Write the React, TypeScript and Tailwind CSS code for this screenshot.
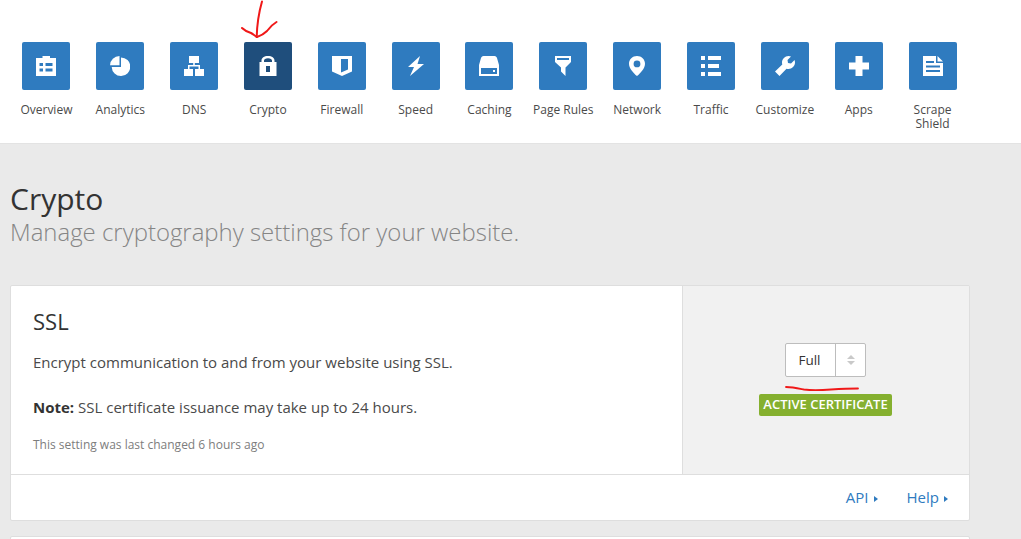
const W = "#fff";

const icons: Record<string, React.ReactNode> = {
  overview: (
    <path fillRule="evenodd" fill={W} d="M6.500 0h7.500v2H20V20H0V2h6.500zM3.500 7v3H7V7zM9.500 7v3h7V7zM3.500 12.500v3H7v-3zM9.500 12.500v3h7v-3z" />
  ),
  analytics: (
    <>
      <path fill={W} d="M9.500 0V9.300H0A9.500 9.500 0 0 1 9.500 0Z" />
      <path fill={W} d="M11 1.400A9.300 9.300 0 1 1 1.700 11H11Z" />
    </>
  ),
  dns: (
    <path fill={W} d="M5 0H15V7H10.800V9H16V13H20V20H11V13H14.500V10.500H5.500V13H9V20H0V13H4V9H9.200V7H5Z" />
  ),
  crypto: (
    <path fillRule="evenodd" fill={W} d="M3.500 6V4.500C3.500 2 6 0 10 0S16.500 2 16.500 4.500V6H18.500V20H1.500V6ZM6 6H14V4.500C14 3.200 12.500 2.200 10 2.200S6 3.200 6 4.500ZM8 10V16H12V10Z" />
  ),
  firewall: (
    <path fillRule="evenodd" fill={W} d="M0 0H20V15.500L10 20 0 15.500ZM9 3V16.500L16 13.500V3Z" />
  ),
  speed: <path fill={W} d="M14 0 2 11H8L4 20 18 8H11.500Z" />,
  caching: (
    <path fillRule="evenodd" fill={W} d="M4.500 0H15.500C17 0 17.500 1 18 2L20 9V20H0V9L2 2C2.500 1 3 0 4.500 0ZM2 12V18H18V12ZM14 14H16V16H14Z" />
  ),
  pagerules: (
    <path fillRule="evenodd" fill={W} d="M2 0H18V6L12.500 11.500V20L8 15.500V11.500L2 6ZM4 2V4H16V2Z" />
  ),
  network: (
    <path fillRule="evenodd" fill={W} d="M10 0C14.500 0 18 3.300 18 7.700 18 12.200 13.500 17.200 10 20 6.500 17.200 2 12.200 2 7.700 2 3.300 5.500 0 10 0ZM10 4.500A3.400 3.400 0 1 0 10 11.300 3.400 3.400 0 0 0 10 4.500Z" />
  ),
  traffic: (
    <path fill={W} d="M0 0H4V4H0ZM7 0H20V4H7ZM0 8H4V12H0ZM7 8H18V12H7ZM0 16H4V20H0ZM7 16H20V20H7Z" />
  ),
  customize: (
    <path fill={W} d="M13.500 0C14.500 0 15.500.2 16 .5L12.500 4 13 7 16 7.500 19.500 4C19.800 4.700 20 5.500 20 6.500 20 10 17 13 13.500 13 12.800 13 12.200 12.900 11.500 12.700L4.500 20 0 15.500 7.300 8.500C7.100 7.800 7 7.200 7 6.500 7 3 10 0 13.500 0Z" />
  ),
  apps: <path fill={W} d="M6.500 0h7v6.500H20v7h-6.500V20h-7v-6.500H0v-7h6.500z" />,
  scrape: (
    <path fillRule="evenodd" fill={W} d="M0 0H13V7H20V20H0ZM14.500 0 20 5.500H14.500ZM3 5V7H11V5ZM3 9.500V11.500H17V9.500ZM3 14V16H17V14Z" />
  ),
};

const items: [string, string][] = [
  ["Overview", "overview"],
  ["Analytics", "analytics"],
  ["DNS", "dns"],
  ["Crypto", "crypto"],
  ["Firewall", "firewall"],
  ["Speed", "speed"],
  ["Caching", "caching"],
  ["Page Rules", "pagerules"],
  ["Network", "network"],
  ["Traffic", "traffic"],
  ["Customize", "customize"],
  ["Apps", "apps"],
  ["Scrape Shield", "scrape"],
];

function Arrow() {
  return (
    <svg className="absolute left-[240px] top-0" width="38" height="42" viewBox="0 0 38 42" fill="none" stroke="#f01818" strokeWidth="2" strokeLinecap="round" strokeLinejoin="round">
      <path d="M22 1.500C19 12 17 25 16.700 37" />
      <path d="M2 28C5 31 8 32 11 33 13 34 15 36 17 37 20 36 24 34 27 31 30 27 33 24 36.500 22" />
    </svg>
  );
}

function Underline() {
  return (
    <svg className="absolute left-[785px] top-[385px]" width="76" height="8" viewBox="0 0 76 8" fill="none" stroke="#f01818" strokeWidth="1.800" strokeLinecap="round">
      <path d="M1 2C8 2 14 3.500 19 4.500 27 5.500 39 5 46 4.500 54 4 64 3.500 73 3.500" />
    </svg>
  );
}

function Caret() {
  return <span className="ml-[5px] inline-block h-0 w-0 border-y-[3.500px] border-l-[4px] border-y-transparent border-l-[#2f7bbf] align-[1px]" />;
}

export default function App() {
  return (
    <div className="relative h-[539px] w-[1021px] overflow-hidden bg-[#eaeaea] font-['Open_Sans',sans-serif] text-[#333]">
      <nav className="flex h-[144px] border-b border-[#e3e3e3] bg-white pl-[9.500px] pt-[42px]">
        {items.map(([label, key]) => (
          <div key={key} className="flex w-[73.850px] shrink-0 flex-col items-center">
            <div className={`flex h-12 w-12 items-center justify-center rounded-[2px] ${key === "crypto" ? "bg-[#1f4e7c]" : "bg-[#2f7bbf]"}`}>
              <svg width="20" height="20" viewBox="0 0 20 20">{icons[key]}</svg>
            </div>
            <div className="mt-[13px] w-[70px] text-center text-[12px] leading-[14px] text-[#4a4a4a]">{label}</div>
          </div>
        ))}
      </nav>

      <div className="pl-[10px] pt-[38px]">
        <h1 className="text-[30px] font-normal leading-[34px] text-[#333]">Crypto</h1>
        <p className="text-[23.950px] font-light leading-[32px] text-[#858585]">Manage cryptography settings for your website.</p>

        <section className="mt-[37px] w-[960px] rounded-[2px] border border-[#dedede] bg-white">
          <div className="flex h-[189px] border-b border-[#dedede]">
            <div className="flex-1 pl-[22px] pt-[21px]">
              <h2 className="text-[22px] font-normal leading-[28px] text-[#333]">SSL</h2>
              <p className="mt-[17px] text-[15px] leading-[20px] text-[#4a4a4a]">Encrypt communication to and from your website using SSL.</p>
              <p className="mt-[25px] text-[15px] leading-[20px] text-[#4a4a4a]"><strong className="font-bold text-[#333]">Note:</strong> SSL certificate issuance may take up to 24 hours.</p>
              <p className="mt-[20px] text-[12px] leading-[16px] text-[#7d7d7d]">This setting was last changed 6 hours ago</p>
            </div>
            <div className="flex w-[287px] flex-col items-center border-l border-[#dedede] bg-[#f1f1f1] pr-[1px] pt-[57px]">
              <div className="flex h-[34px] w-[81px] rounded-[2px] border border-[#bdbdbd] bg-white">
                <div className="flex w-[50px] items-center justify-center border-r border-[#bdbdbd] pr-[2px] text-[13.500px] text-[#333]">Full</div>
                <div className="flex flex-1 flex-col items-center justify-center gap-[2px]">
                  <span className="h-0 w-0 border-x-[4px] border-b-[4px] border-x-transparent border-b-[#c9c9c9]" />
                  <span className="h-0 w-0 border-x-[4px] border-t-[4px] border-x-transparent border-t-[#c9c9c9]" />
                </div>
              </div>
              <div className="mt-[17px] flex h-[22px] w-[133px] items-center justify-center rounded-[2px] bg-[#85b02f] text-[13px] font-semibold text-white">ACTIVE CERTIFICATE</div>
            </div>
          </div>
          <div className="flex h-[45px] items-center justify-end pr-[21px] text-[15px] text-[#2f7bbf]">
            <span>API<Caret /></span>
            <span className="ml-[29px]">Help<Caret /></span>
          </div>
        </section>

        <div className="mt-[15px] h-[20px] w-[960px] rounded-[2px] border border-[#dedede] bg-white" />
      </div>
      <Arrow />
      <Underline />
    </div>
  );
}
